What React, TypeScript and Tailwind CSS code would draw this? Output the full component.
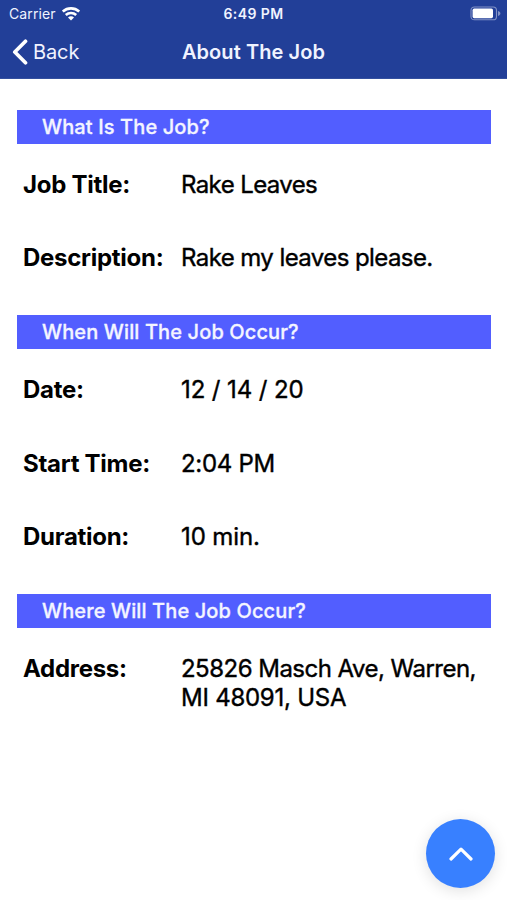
import React from 'react';

function Heading({ children }: { children: React.ReactNode }) {
  return (
    <h2 className="mr-4 ml-[17px] flex h-[34.3px] items-center bg-[#525eff] pl-[25px] text-[20px] font-medium tracking-[0.12px] text-[#f4f5ff] [-webkit-text-stroke:0.3px_#f4f5ff]">
      {children}
    </h2>
  );
}

function Row({ label, tracking, children }: { label: string; tracking: string; children: React.ReactNode }) {
  return (
    <div className="flex pl-[23px] text-[24px] leading-[29.3px] text-black">
      <dt className="w-[158px] shrink-0 font-bold tracking-[-0.28px] whitespace-nowrap">{label}</dt>
      <dd className={`whitespace-nowrap font-normal [-webkit-text-stroke:0.4px_black] ${tracking}`}>{children}</dd>
    </div>
  );
}

function Wifi() {
  return (
    <svg width="18" height="14" viewBox="0 0 18 14" fill="none" stroke="white" strokeWidth="2.6" aria-hidden="true">
      <path d="M.8 4.6C5.5 .3 12.5 .3 17.2 4.6" />
      <path d="M3.8 8C6.7 5.3 11.3 5.3 14.2 8" />
      <path d="M6 10.6C7.6 8.9 10.4 8.9 12 10.6L9 13.6Z" fill="white" stroke="none" />
    </svg>
  );
}

function Battery() {
  return (
    <svg width="31" height="15" viewBox="0 0 31 15" fill="none" aria-hidden="true">
      <rect x="1" y="1" width="25.5" height="12.8" rx="3.4" stroke="#8292c5" strokeWidth="1.1" />
      <rect x="2.6" y="2.6" width="20.4" height="9.6" rx="1.6" fill="white" />
      <path d="M28 5.1C31.2 6.3 31.2 8.7 28 9.9Z" fill="#8292c5" />
    </svg>
  );
}

export default function App() {
  return (
    <main className="relative flex h-[900px] w-[507px] flex-col overflow-hidden bg-white font-['Inter','Liberation_Sans',sans-serif]">
      <header className="h-[79px] shrink-0 border-b border-[#34509f] bg-[#223f98] text-[#f0f3ff]">
        <div className="grid h-[27px] grid-cols-3 items-center text-[14px]">
          <div className="flex items-center gap-[6px] pl-[9px]">
            <span className="tracking-[0.1px]">Carrier</span>
            <Wifi />
          </div>
          <span className="text-center font-semibold tracking-[0.4px]">6:49 PM</span>
          <div className="flex justify-end pr-[6px]"><Battery /></div>
        </div>
        <div className="grid h-[50px] grid-cols-3 items-center text-[20px]">
          <button className="flex items-center gap-[5px] pl-[12px]">
            <svg width="16" height="26" viewBox="0 0 16 26" fill="none" stroke="white" strokeWidth="3.7" strokeLinecap="round" strokeLinejoin="round" aria-hidden="true">
              <path d="M13.5 2.2L2.8 13L13.5 23.8" />
            </svg>
            <span className="tracking-[-0.1px]">Back</span>
          </button>
          <h1 className="text-center font-semibold whitespace-nowrap tracking-[0.08px]">About The Job</h1>
        </div>
      </header>
      <div className="flex flex-col pt-[30.7px]">
        <Heading>What Is The Job?</Heading>
        <dl className="flex flex-col gap-[44px] pt-[26px] pb-[42.5px]">
          <Row label="Job Title:" tracking="tracking-[-0.6px]">Rake Leaves</Row>
          <Row label="Description:" tracking="tracking-[-0.58px]">Rake my leaves please.</Row>
        </dl>
        <Heading>When Will The Job Occur?</Heading>
        <dl className="flex flex-col gap-[44px] pt-[26px] pb-[42.5px]">
          <Row label="Date:" tracking="tracking-[-0.1px]">12 / 14 / 20</Row>
          <Row label="Start Time:" tracking="tracking-[-0.3px]">2:04 PM</Row>
          <Row label="Duration:" tracking="tracking-[-0.1px]">10 min.</Row>
        </dl>
        <Heading>Where Will The Job Occur?</Heading>
        <dl className="pt-[26px]">
          <Row label="Address:" tracking="tracking-[-0.52px]">
            25826 Masch Ave, Warren,<br />
            <span className="tracking-[-0.25px]">MI 48091, USA</span>
          </Row>
        </dl>
      </div>
      <button aria-label="Scroll to top" className="absolute right-[12px] bottom-[12px] flex size-[69px] items-center justify-center rounded-full bg-[#3880ff] shadow-[0_3px_15px_rgba(0,0,0,0.12)]">
        <svg width="24" height="14" viewBox="0 0 24 14" fill="none" stroke="white" strokeWidth="3.2" strokeLinecap="round" strokeLinejoin="round" aria-hidden="true">
          <path d="M2 12L12 2.2L22 12" />
        </svg>
      </button>
    </main>
  );
}
